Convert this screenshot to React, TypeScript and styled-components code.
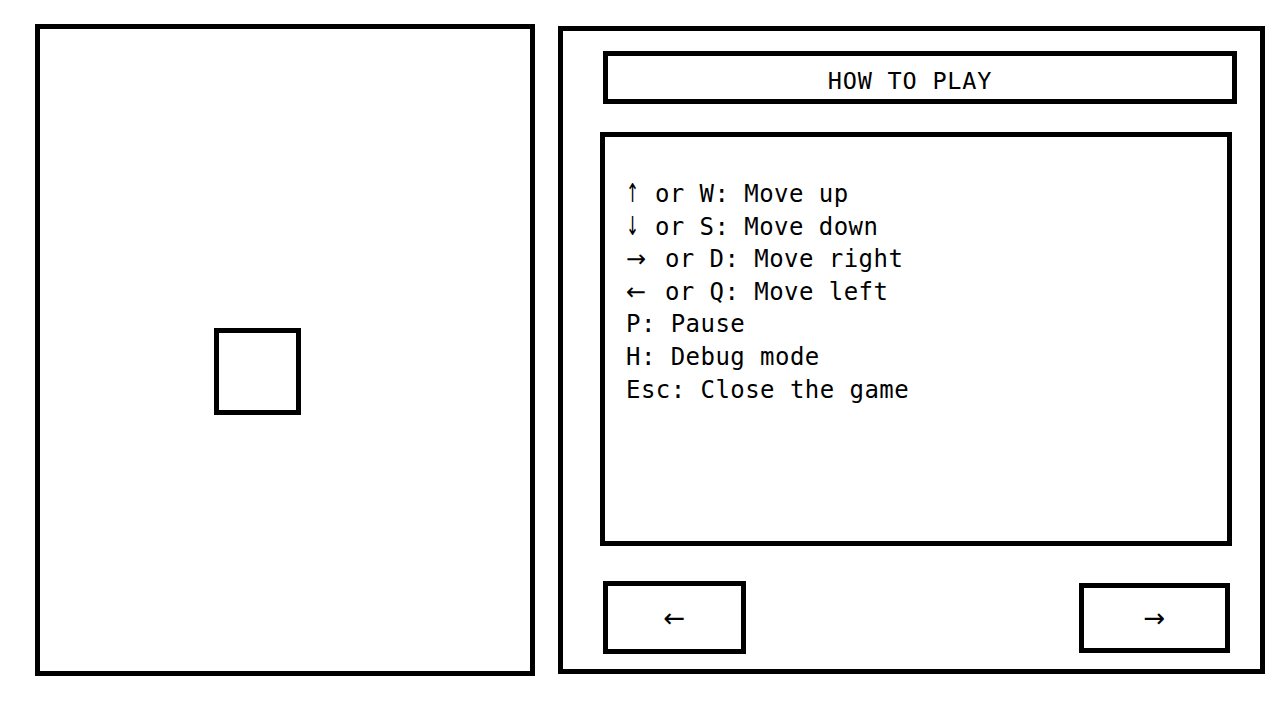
import React, { FC } from 'react';
import styled, { createGlobalStyle } from 'styled-components';

const GlobalStyle = createGlobalStyle`
  * {
    box-sizing: border-box;
  }
  body {
    margin: 0;
    background: #ffffff;
    font-family: 'DejaVu Sans Mono', 'Liberation Mono', monospace;
    color: #000000;
  }
`;

const Page = styled.div`
  display: flex;
  align-items: flex-start;
  gap: 23px;
  width: 1280px;
  height: 700px;
  padding: 24px 0 0 35px;
`;

const GameArea = styled.div`
  position: relative;
  width: 500px;
  height: 652px;
  border: 5px solid #000;
`;

const Player = styled.div<{ $x: number; $y: number }>`
  position: absolute;
  left: ${(p) => p.$x}px;
  top: ${(p) => p.$y}px;
  width: 87px;
  height: 87px;
  border: 5px solid #000;
`;

const SidePanel = styled.div`
  display: flex;
  flex-direction: column;
  width: 707px;
  height: 648px;
  margin-top: 2px;
  padding: 20px 0 0 37px;
  border: 5px solid #000;
`;

const TitleBox = styled.div`
  display: flex;
  align-items: center;
  justify-content: center;
  width: 634px;
  height: 53px;
  margin-left: 3px;
  padding: 6px 20px 0 0;
  border: 5px solid #000;
  font-size: 23.5px;
  letter-spacing: 0.8px;
`;

const HelpBox = styled.div`
  width: 632px;
  height: 414px;
  margin-top: 28px;
  padding: 41px 0 0 21px;
  border: 5px solid #000;
  font-size: 24px;
  letter-spacing: 0.45px;
  line-height: 32.6px;
`;

const Line = styled.div`
  white-space: pre;
`;

const Arrow = styled.span<{ $wide?: boolean }>`
  display: inline-block;
  width: ${(p) => (p.$wide ? '24px' : '14px')};
  font-family: 'DejaVu Sans', sans-serif;
  font-size: ${(p) => (p.$wide ? '24px' : '26px')};
  line-height: 1;
  letter-spacing: 0;
  transform: ${(p) => (p.$wide ? 'none' : 'scaleX(0.6)')};
  transform-origin: left center;
`;

const ButtonRow = styled.div`
  display: flex;
  justify-content: space-between;
  align-items: center;
  width: 627px;
  height: 73px;
  margin: 35px 0 0 3px;
`;

const NavButton = styled.button<{ $w: number; $h: number }>`
  display: flex;
  align-items: center;
  justify-content: center;
  width: ${(p) => p.$w}px;
  height: ${(p) => p.$h}px;
  padding: 0;
  background: #fff;
  border: 5px solid #000;
  font-family: 'DejaVu Sans', sans-serif;
  font-size: 26px;
  line-height: 1;
  color: #000;
  cursor: pointer;
`;

interface IHelpLine {
  arrow?: string;
  wide?: boolean;
  text: string;
}

const lines: IHelpLine[] = [
  { arrow: '↑', text: ' or W: Move up' },
  { arrow: '↓', text: ' or S: Move down' },
  { arrow: '→', wide: true, text: ' or D: Move right' },
  { arrow: '←', wide: true, text: ' or Q: Move left' },
  { text: 'P: Pause' },
  { text: 'H: Debug mode' },
  { text: 'Esc: Close the game' },
];

const App: FC = () => (
  <>
    <GlobalStyle />
    <Page>
      <GameArea>
        <Player $x={174} $y={299} />
      </GameArea>
      <SidePanel>
        <TitleBox>HOW TO PLAY</TitleBox>
        <HelpBox>
          {lines.map((l) => (
            <Line key={l.text}>
              {l.arrow && <Arrow $wide={l.wide}>{l.arrow}</Arrow>}
              {l.text}
            </Line>
          ))}
        </HelpBox>
        <ButtonRow>
          <NavButton $w={143} $h={73}>←</NavButton>
          <NavButton $w={151} $h={70}>→</NavButton>
        </ButtonRow>
      </SidePanel>
    </Page>
  </>
);

export default App;
